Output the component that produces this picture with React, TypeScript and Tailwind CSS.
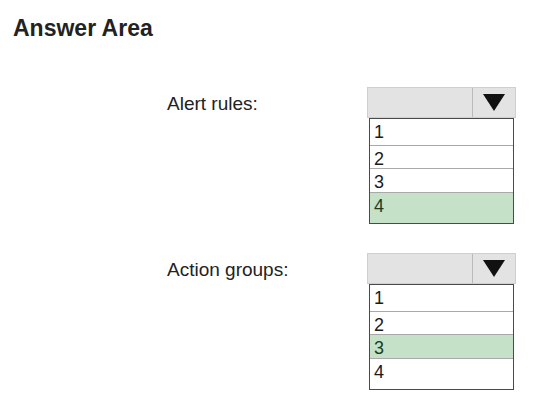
const lists = [
  { label: "Alert rules:", picked: 4 },
  { label: "Action groups:", picked: 3 },
];

const rowHeights = ["h-[27px]", "h-[23px]", "h-[24px]", "h-[30px]"];

const Dropdown = ({ picked }: { picked: number }) => (
  <div className="flex flex-col w-[149px]">
    <div className="flex flex-row h-[31px] bg-[#e3e3e3] border border-[#cfcfcf]">
      <div className="flex-1 border-r border-[#b9b9b9]" />
      <div className="w-[42px] flex items-center justify-center">
        <svg width="22" height="17" viewBox="0 0 22 17">
          <polygon points="0,0 22,0 11,17" fill="#111" />
        </svg>
      </div>
    </div>
    <div className="mx-[2px] flex flex-col border border-[#4a4a4a] bg-white">
      {[1, 2, 3, 4].map((n, i) => (
        <div
          key={n}
          className={`${rowHeights[i]} pl-[4px] pt-[4px] text-[18px] leading-none ${
            i < 3 ? "border-b border-[#a9a9a9]" : ""
          } ${n === picked ? "bg-[#c5e2c8] text-[#1e3b22]" : "text-[#1a1a1a]"}`}
        >
          {n}
        </div>
      ))}
    </div>
  </div>
);

const App = () => {
  return (
    <div
      className="w-[535px] h-[406px] bg-white flex flex-col"
      style={{ fontFamily: '"Liberation Sans", Arial, sans-serif' }}
    >
      <h1 className="ml-[13px] mt-[17px] text-[23px] leading-none font-bold text-[#222]">
        Answer Area
      </h1>
      <div className="flex flex-col gap-[29px] mt-[47px]">
        {lists.map((l) => (
          <div key={l.label} className="flex flex-row pl-[167px]">
            <div className="w-[200px] pt-[7px] text-[19px] leading-none text-[#222]">
              {l.label}
            </div>
            <Dropdown picked={l.picked} />
          </div>
        ))}
      </div>
    </div>
  );
};

export default App;
